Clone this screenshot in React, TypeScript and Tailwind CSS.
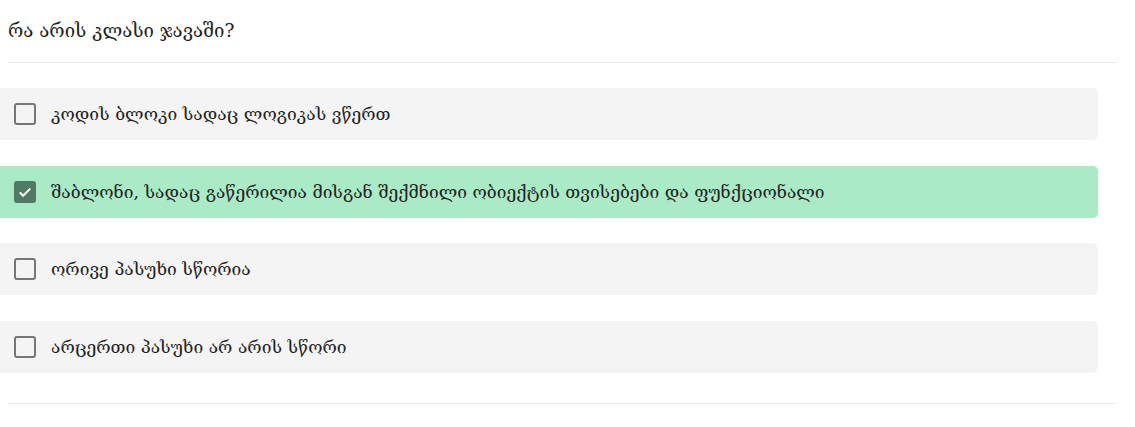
import React, { useState } from 'react';

const options = [
  'კოდის ბლოკი სადაც ლოგიკას ვწერთ',
  'შაბლონი, სადაც გაწერილია მისგან შექმნილი ობიექტის თვისებები და ფუნქციონალი',
  'ორივე პასუხი სწორია',
  'არცერთი პასუხი არ არის სწორი',
];

function Box({ checked }: { checked: boolean }) {
  return checked ? (
    <span className="flex h-[22px] w-[22px] items-center justify-center rounded-[3px] bg-[#4f7a64]">
      <svg viewBox="0 0 24 24" className="h-[18px] w-[18px]" fill="none" stroke="#fff" strokeWidth="2.6">
        <path d="M5 12.5l4.5 4.5L19 7.5" />
      </svg>
    </span>
  ) : (
    <span className="block h-[22px] w-[22px] rounded-[3px] border-[2.5px] border-[#767676]" />
  );
}

export default function App() {
  const [selected, setSelected] = useState(1);

  return (
    <div className="min-h-[427px] w-[1135px] bg-white pt-[18px] text-[#222] [font-family:'DejaVu_Serif',serif]">
      <div className="px-[8px] pr-[18px]">
        <p className="pb-[18px] text-[18.6px] leading-[26px]">რა არის კლასი ჯავაში?</p>
        <div className="h-px bg-[#ebebeb]" />
      </div>

      <div className="flex w-[1098px] flex-col gap-[25.6px] pt-[25px] pb-[30px]">
        {options.map((o, i) => (
          <button
            key={i}
            onClick={() => setSelected(i)}
            className={`flex h-[52px] items-center gap-[15px] rounded-r-[5px] pl-[14px] text-left text-[17.4px] ${
              selected === i ? 'bg-[#aaeac7]' : 'bg-[#f4f4f4]'
            }`}
          >
            <Box checked={selected === i} />
            <span>{o}</span>
          </button>
        ))}
      </div>

      <div className="px-[8px] pr-[18px]">
        <div className="h-px bg-[#ebebeb]" />
      </div>
    </div>
  );
}
